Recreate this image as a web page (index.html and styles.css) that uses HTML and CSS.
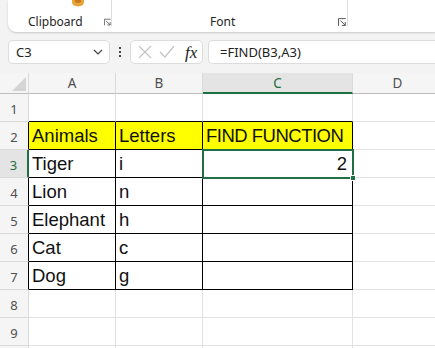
FILE: index.html
```html
<!DOCTYPE html>
<html>
<head>
<meta charset="utf-8">
<link rel="stylesheet" href="styles.css">
</head>
<body>
<div class="ribbon">
  <div class="group g-clip">
    <svg class="paste" width="14" height="7" viewBox="0 0 14 7"><path d="M1 0 H13 V2 Q13 6 7 6.5 Q1 6 1 2 Z" fill="#e8a33a"/><path d="M4 0 H10 V2 Q7 4 4 2 Z" fill="#c77a1c"/></svg>
    <span class="label">Clipboard</span>
    <svg class="launcher" width="9" height="9" viewBox="0 0 9 9"><path d="M0.5 8 V0.5 H8" fill="none" stroke="#555" stroke-width="1"/><path d="M2.5 2.5 L7.5 7.5 M4 7.5 H7.5 V4" fill="none" stroke="#555" stroke-width="1"/></svg>
  </div>
  <div class="sep"></div>
  <div class="group g-font">
    <span class="label">Font</span>
    <svg class="launcher" width="9" height="9" viewBox="0 0 9 9"><path d="M0.5 8 V0.5 H8" fill="none" stroke="#555" stroke-width="1"/><path d="M2.5 2.5 L7.5 7.5 M4 7.5 H7.5 V4" fill="none" stroke="#555" stroke-width="1"/></svg>
  </div>
  <div class="sep"></div>
</div>

<div class="fbar">
  <div class="namebox">
    <span>C3</span>
    <svg width="10" height="6" viewBox="0 0 10 6"><path d="M1 1 L5 5 L9 1" fill="none" stroke="#444" stroke-width="1.2"/></svg>
  </div>
  <div class="dots"><i></i><i></i><i></i></div>
  <div class="btns">
    <svg width="14" height="14" viewBox="0 0 14 14"><path d="M1 1 L13 13 M13 1 L1 13" stroke="#c4c4c4" stroke-width="1.2" fill="none"/></svg>
    <svg width="16" height="14" viewBox="0 0 16 14"><path d="M1 7 L6 12 L15 1" stroke="#c4c4c4" stroke-width="1.2" fill="none"/></svg>
    <span class="fx">fx</span>
  </div>
  <div class="formula">=FIND(B3,A3)</div>
</div>

<div class="grid">
  <div class="h corner"><svg width="14" height="14" viewBox="0 0 14 14"><path d="M14 0 V14 H0 Z" fill="#d4d4d4"/></svg></div>
  <div class="h col">A</div>
  <div class="h col">B</div>
  <div class="h col sel">C</div>
  <div class="h col">D</div>

  <div class="h rowh">1</div>
  <div class="c tb"></div><div class="c tb"></div><div class="c tb"></div><div class="c"></div>

  <div class="h rowh tl">2</div>
  <div class="c t y">Animals</div><div class="c t y">Letters</div><div class="c t y caps">FIND FUNCTION</div><div class="c"></div>

  <div class="h rowh sel">3</div>
  <div class="c t">Tiger</div><div class="c t">i</div><div class="c t num active">2<span class="selbox"><b class="handle"></b></span></div><div class="c"></div>

  <div class="h rowh tl">4</div>
  <div class="c t">Lion</div><div class="c t">n</div><div class="c t"></div><div class="c"></div>

  <div class="h rowh tl">5</div>
  <div class="c t">Elephant</div><div class="c t">h</div><div class="c t"></div><div class="c"></div>

  <div class="h rowh tl">6</div>
  <div class="c t">Cat</div><div class="c t">c</div><div class="c t"></div><div class="c"></div>

  <div class="h rowh tl">7</div>
  <div class="c t">Dog</div><div class="c t">g</div><div class="c t"></div><div class="c"></div>

  <div class="h rowh">8</div>
  <div class="c"></div><div class="c"></div><div class="c"></div><div class="c"></div>

  <div class="h rowh">9</div>
  <div class="c"></div><div class="c"></div><div class="c"></div><div class="c"></div>

  <div class="h rowh"></div>
  <div class="c"></div><div class="c"></div><div class="c"></div><div class="c"></div>
</div>
</body>
</html>
```

FILE: styles.css
```css
* { box-sizing: border-box; }
html, body {
  margin: 0;
  padding: 0;
}
body {
  width: 435px;
  height: 348px;
  overflow: hidden;
  background: #f3f3f3;
  font-family: "Noto Sans", "Liberation Sans", sans-serif;
  color: #222;
}

/* ribbon */
.ribbon {
  margin-left: 8px;
  height: 32px;
  background: #fff;
  border-bottom-left-radius: 8px;
  box-shadow: 0 1px 2px rgba(0,0,0,0.18);
  display: flex;
}
.group {
  position: relative;
  display: flex;
  height: 32px;
}
.g-clip { width: 103px; }
.g-font { width: 235px; }
.label {
  font-size: 12px;
  line-height: 16px;
  padding-top: 14px;
  color: #262626;
}
.g-clip .label { margin-left: 20px; }
.g-font .label { margin-left: 98px; }
.launcher {
  margin-top: 18px;
}
.g-clip .launcher { margin-left: 21px; }
.g-font .launcher { margin-left: 103px; }
.paste {
  position: absolute;
  left: 63px;
  top: 0;
}
.sep {
  width: 1px;
  height: 26px;
  background: #dcdcdc;
}

/* formula bar */
.fbar {
  margin-top: 8px;
  height: 24px;
  display: flex;
  padding-left: 8px;
}
.namebox {
  width: 102px;
  height: 24px;
  background: #fff;
  border: 1px solid #dcdcdc;
  border-radius: 5px;
  display: flex;
  align-items: center;
  justify-content: space-between;
  padding: 0 6px 0 7px;
  font-size: 13px;
  color: #222;
}
.dots {
  width: 20px;
  display: flex;
  flex-direction: column;
  align-items: center;
  justify-content: center;
  gap: 2px;
}
.dots i {
  display: block;
  width: 2px;
  height: 2px;
  background: #444;
}
.btns {
  width: 73px;
  height: 24px;
  background: #fff;
  border: 1px solid #dcdcdc;
  border-radius: 5px;
  display: flex;
  align-items: center;
  padding-left: 7px;
  gap: 7px;
}
.fx {
  font-family: "Liberation Serif", "DejaVu Serif", serif;
  font-style: italic;
  font-size: 17px;
  color: #222;
  margin-left: 3px;
  line-height: 1;
}
.formula {
  margin-left: 5px;
  flex: 1;
  height: 24px;
  background: #fff;
  border: 1px solid #dcdcdc;
  border-right: none;
  border-radius: 5px 0 0 5px;
  font-size: 13px;
  line-height: 22px;
  padding-left: 11px;
  color: #222;
}

/* grid */
.grid {
  margin-top: 9px;
  display: grid;
  grid-template-columns: 29px 87px 87px 150px 90px;
  grid-template-rows: 21px;
  grid-auto-rows: 28px;
}
.h {
  background: #f5f5f5;
  border-right: 1px solid #dadada;
  border-bottom: 1px solid #dadada;
  color: #505050;
  font-family: "Noto Sans", "Liberation Sans", sans-serif;
  display: flex;
  align-items: center;
  justify-content: center;
}
.corner {
  align-items: flex-end;
  justify-content: flex-end;
  padding: 0 2px 2px 0;
  border-bottom-color: #bdbdbd;
}
.col {
  font-size: 13.5px;
  border-bottom-color: #bdbdbd;
}
.col.sel {
  background: #e4e4e4;
  color: #1d6b40;
  border-bottom: 2px solid #1f7145;
}
.rowh {
  font-size: 13px;
  padding-top: 2px;
}
.rowh.tl { border-right-color: #000; }
.rowh.sel {
  background: #e4e4e4;
  color: #1d6b40;
  border-right: 2px solid #1f7145;
}
.c {
  background: #fff;
  border-right: 1px solid #e1e1e1;
  border-bottom: 1px solid #e1e1e1;
  font-family: "Liberation Sans", Arial, sans-serif;
  font-size: 18.5px;
  color: #111;
  display: flex;
  align-items: flex-end;
  padding: 0 3px 2px 3px;
  line-height: 22px;
  white-space: nowrap;
}
.c.tb { border-bottom-color: #000; }
.c.t {
  border-right-color: #000;
  border-bottom-color: #000;
}
.c.y { background: #ffff00; }
.c.caps { letter-spacing: -0.5px; }
.c.num { justify-content: flex-end; padding-right: 5px; }
.active { position: relative; }
.selbox {
  position: absolute;
  left: -1px;
  top: -1px;
  right: -2px;
  bottom: -2px;
  border: 2px solid #1f7145;
}
.handle {
  position: absolute;
  right: -4px;
  bottom: -4px;
  width: 6px;
  height: 6px;
  background: #1f7145;
  border: 1px solid #fff;
}
```
